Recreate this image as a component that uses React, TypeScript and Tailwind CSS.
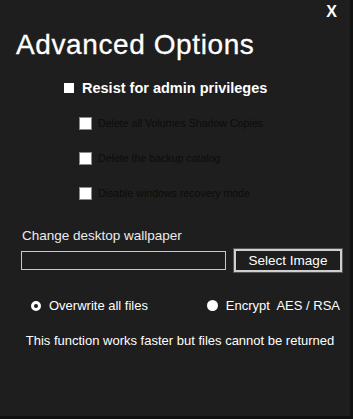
import React, { useState } from 'react';

const font = { fontFamily: '"Liberation Sans", Arial, sans-serif' };

const SubOption: React.FC<{ label: string }> = ({ label }) => (
    <label className="flex items-center gap-[6px] h-[13px]">
        <span className="w-[13px] h-[13px] bg-white border border-[#8a8a8a] shrink-0" />
        <span className="text-[10.6px] text-[#0c0c0c] leading-none">{label}</span>
    </label>
);

export default function App() {
    const [mode, setMode] = useState<'overwrite' | 'encrypt'>('encrypt');

    return (
        <div style={font} className="w-[353px] h-[419px] bg-[#1e1e1e] text-white relative border-r-[3px] border-b-[3px] border-[#111111] flex flex-col">
            <button className="absolute right-[13px] top-[4px] text-[16px] font-bold leading-none text-white">X</button>

            <h1 className="ml-[16px] mt-[31px] text-[28px] leading-none tracking-[0.6px] [-webkit-text-stroke:0.3px_white]">Advanced Options</h1>

            <label className="flex items-center gap-[8px] ml-[64px] mt-[22px]">
                <span className="w-[10px] h-[10px] bg-white shrink-0" />
                <span className="text-[14.5px] font-bold leading-none">Resist for admin privileges</span>
            </label>

            <div className="flex flex-col gap-[22px] ml-[79px] mt-[21px]">
                <SubOption label="Delete all Volumes Shadow Copies" />
                <SubOption label="Delete the backup catalog" />
                <SubOption label="Disable windows recovery mode" />
            </div>

            <div className="ml-[22px] mt-[29px] text-[13.5px] text-[#ececec] leading-none">Change desktop wallpaper</div>

            <div className="flex items-center ml-[21px] mt-[7px] gap-[8px]">
                <div className="w-[205px] h-[19px] border border-[#c8c8c8] bg-[#1e1e1e]" />
                <button className="w-[108px] h-[23px] border-2 border-[#cfcfcf] outline outline-1 outline-[#555] text-[13.5px] leading-none text-white">Select Image</button>
            </div>

            <div className="flex items-center justify-between ml-[31px] mr-[10px] mt-[27px] text-[13px] leading-none">
                <button onClick={() => setMode('overwrite')} className="flex items-center gap-[8px]">
                    <span className="w-[10px] h-[10px] rounded-full border-[3px] border-white shrink-0" />
                    <span>Overwrite all files</span>
                </button>
                <button onClick={() => setMode('encrypt')} className="flex items-center gap-[8px]">
                    <span className="w-[11px] h-[11px] rounded-full bg-white shrink-0" />
                    <span>Encrypt&nbsp; AES / RSA</span>
                </button>
            </div>

            <p className="mt-[22px] text-center text-[13px] leading-none pl-[10px]">
                This function works faster but files cannot be returned
            </p>
        </div>
    );
}
